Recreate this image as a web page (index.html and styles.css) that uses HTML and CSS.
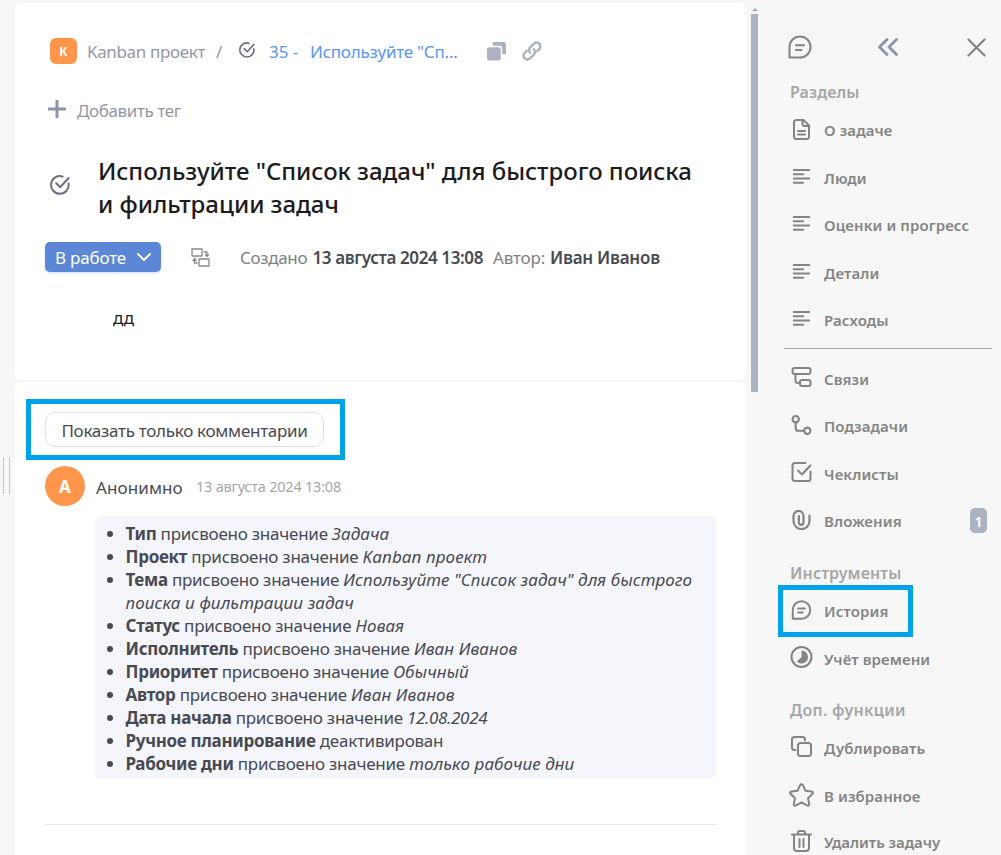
FILE: index.html
```html
<!DOCTYPE html>
<html lang="ru">
<head>
<meta charset="utf-8">
<title>Kanban проект</title>
<link rel="stylesheet" href="styles.css">
</head>
<body>
<svg class="defs" aria-hidden="true">
  <symbol id="check-circle" viewBox="0 0 20 20"><path d="M12.6 1.6A8.8 8.8 0 1 0 18.5 8.4"/><path d="M6.3 8.2l4 4L18.6 3"/></symbol>
  <symbol id="chat" viewBox="0 0 24 24"><path d="M1.5 22.5V12A10.5 10.5 0 1 1 12 22.5Z"/><path d="M8 10.2h8M8 15h5.5"/></symbol>
  <symbol id="lines" viewBox="0 0 17 15"><path d="M.8 1h15.4M.8 5.2h9.4M.8 9.5h15.4M.8 13.7h9.4"/></symbol>
</svg>
<div class="app">
  <div class="gutter"><span class="grip"></span></div>
  <main class="content">
    <section class="card task">
      <nav class="crumbs">
        <span class="project-mark">К</span>
        <span class="project">Kanban проект</span>
        <span class="slash">/</span>
        <svg class="icon crumb-check"><use href="#check-circle"/></svg>
        <span class="link num">35 -</span>
        <span class="link name">Используйте "Сп...</span>
        <svg class="copy" viewBox="0 0 20 20"><path d="M7 0h10.5Q20 0 20 2.500V13H16V6.500Q16 4 13.500 4H6V1Q6 0 7 0Z"/><rect y="5.500" width="14.500" height="14" rx="2.500"/></svg>
        <svg class="icon chain" viewBox="0 0 20 20"><path d="M8.200 11.800a3.800 3.800 0 0 1 0-5.400l3.700-3.700a3.800 3.800 0 0 1 5.400 5.400l-2 2M11.800 8.200a3.800 3.800 0 0 1 0 5.400l-3.700 3.700a3.800 3.800 0 0 1-5.400-5.400l2-2"/></svg>
      </nav>
      <div class="add-tag">
        <svg class="icon plus" viewBox="0 0 18 18"><path d="M9 1v16M1 9h16"/></svg>
        <span class="tag-label">Добавить тег</span>
      </div>
      <header class="title-row">
        <svg class="icon title-check"><use href="#check-circle"/></svg>
        <h1>Используйте "Список задач" для быстрого поиска<br>и фильтрации задач</h1>
      </header>
      <div class="meta">
        <button class="status"><span>В работе</span><svg class="icon" viewBox="0 0 14 8"><path d="M1 1l6 6 6-6"/></svg></button>
        <svg class="icon flow" viewBox="0 0 19 19"><path d="M1 1h10v7H1zM8 11h10v7H8zM13 4h3v4M14.500 6.800L16 8.500 17.500 6.800M6 15H3.500v-4M2 12.500l1.500-2 1.500 2"/></svg>
        <span class="created">Создано</span>
        <span class="strong date">13 августа 2024 13:08</span>
        <span class="author">Автор:</span>
        <span class="strong person">Иван Иванов</span>
      </div>
      <p class="description">дд</p>
    </section>
    <section class="card history">
      <div class="filter"><button class="only-comments">Показать только комментарии</button></div>
      <div class="entry-head">
        <span class="avatar">А</span>
        <span class="user">Анонимно</span>
        <time>13 августа 2024 13:08</time>
      </div>
      <ul class="changes">
        <li><b>Тип</b> присвоено значение <i>Задача</i></li>
        <li><b>Проект</b> присвоено значение <i>Kanban проект</i></li>
        <li><b>Тема</b> присвоено значение <i>Используйте "Список задач" для быстрого<br>поиска и фильтрации задач</i></li>
        <li><b>Статус</b> присвоено значение <i>Новая</i></li>
        <li><b>Исполнитель</b> присвоено значение <i>Иван Иванов</i></li>
        <li><b>Приоритет</b> присвоено значение <i>Обычный</i></li>
        <li><b>Автор</b> присвоено значение <i>Иван Иванов</i></li>
        <li><b>Дата начала</b> присвоено значение <i class="digits">12.08.2024</i></li>
        <li><b>Ручное планирование</b> деактивирован</li>
        <li><b>Рабочие дни</b> присвоено значение <i>только рабочие дни</i></li>
      </ul>
      <hr>
    </section>
  </main>
  <div class="scroll"><span class="scroll-up"></span><span class="thumb"></span></div>
  <aside class="sidebar">
    <div class="tools">
      <svg class="icon tool-chat"><use href="#chat"/></svg>
      <svg class="icon collapse" viewBox="0 0 20 18"><path d="M9 1.500L1.500 9 9 16.500M18.500 1.500L11 9l7.500 7.500"/></svg>
      <svg class="icon close" viewBox="0 0 20 20"><path d="M1.500 1.500l17 17M18.500 1.500l-17 17"/></svg>
    </div>
    <h2>Разделы</h2>
    <div class="menu">
      <a class="item"><svg class="icon doc" viewBox="0 0 17 21"><path d="M3.500 1H10.500L16 6.500V17.500Q16 20 13.500 20H3.500Q1 20 1 17.500V3.500Q1 1 3.500 1ZM9.500 1V5Q9.500 7 11.500 7H16M5 12h7M5 15.500h7"/></svg><span>О задаче</span></a>
      <a class="item"><svg class="icon list"><use href="#lines"/></svg><span>Люди</span></a>
      <a class="item"><svg class="icon list"><use href="#lines"/></svg><span>Оценки и прогресс</span></a>
      <a class="item"><svg class="icon list"><use href="#lines"/></svg><span>Детали</span></a>
      <a class="item"><svg class="icon list"><use href="#lines"/></svg><span>Расходы</span></a>
    </div>
    <div class="line"></div>
    <div class="menu">
      <a class="item"><svg class="icon s20" viewBox="0 0 20 20"><rect x="1" y="1" width="18" height="6" rx="2"/><rect x="8.500" y="13" width="10.500" height="6" rx="2"/><path d="M4 7v6.500Q4 16 6.500 16h2"/></svg><span>Связи</span></a>
      <a class="item"><svg class="icon s19" viewBox="0 0 19 19"><circle cx="4" cy="4" r="3"/><circle cx="15" cy="15" r="3"/><path d="M4 7v5.500Q4 15 6.500 15H12"/></svg><span>Подзадачи</span></a>
      <a class="item"><svg class="icon s20" viewBox="0 0 20 20"><path d="M14 1H3.500Q1 1 1 3.500v13Q1 19 3.500 19h13q2.500 0 2.500-2.500V9.500M6.500 8.500l4 4L19 3.500"/></svg><span>Чеклисты</span></a>
      <a class="item"><svg class="icon clip" viewBox="0 0 18 20"><path d="M17 5.500V11a8 8 0 0 1-16 0V6a5 5 0 0 1 10 0v6.500a2.300 2.300 0 0 1-4.600 0V6"/></svg><span>Вложения</span><b class="badge">1</b></a>
    </div>
    <h2 class="instruments">Инструменты</h2>
    <div class="menu">
      <a class="item active"><svg class="icon chat"><use href="#chat"/></svg><span>История</span></a>
      <a class="item"><svg class="icon s22" viewBox="0 0 22 22"><circle cx="11" cy="11" r="10"/><path class="solid" d="M11 4.500A6.500 6.500 0 1 1 6.400 15.600L11 11Z"/></svg><span>Учёт времени</span></a>
    </div>
    <h2 class="extra">Доп. функции</h2>
    <div class="menu">
      <a class="item"><svg class="icon dup" viewBox="0 0 21 21"><rect x="7" y="7" width="13" height="13" rx="2.500"/><path d="M4.500 14H3.500Q1 14 1 11.500V3.500Q1 1 3.500 1H11.500Q14 1 14 3.500v1"/></svg><span>Дублировать</span></a>
      <a class="item"><svg class="icon star" viewBox="0 0 25 24"><path d="M11 2.300q1.500-2 3 0l2.500 5.500 6 .7q2.300.6.800 2.500L19 15.200l1.200 5.900q-.2 2.200-2.300 1.300L12.500 19.300 7.100 22.400q-2.100.9-2.300-1.300L6 15.200 1.700 11Q.2 9.100 2.500 8.500l6-.7Z"/></svg><span>В избранное</span></a>
      <a class="item last"><svg class="icon trash" viewBox="0 0 21 22"><path d="M1 4.500h19M3 4.500V18q0 3 3 3h9q3 0 3-3V4.500M7 4V2.500Q7 1 8.500 1h4Q14 1 14 2.500V4M8.500 9v8M12.500 9v8"/></svg><span>Удалить задачу</span></a>
    </div>
  </aside>
</div>
</body>
</html>
```
FILE: styles.css
```css
*, *::after { box-sizing: border-box; }
body { margin: 0; background: #f7f7f7; font-family: "Noto Sans", "Open Sans", sans-serif; font-size: 17px; color: #484a52; }
.defs { display: none; }
.app { display: grid; grid-template-columns: 15px 731px 12px 1fr; height: 855px; overflow: hidden; white-space: nowrap; }
button { font: inherit; margin: 0; }
.icon { fill: none; stroke: currentColor; stroke-width: 2; stroke-linecap: round; stroke-linejoin: round; flex: none; }

.gutter { padding: 457px 0 0 3px; }
.grip { display: block; width: 7px; height: 37px; border: solid #c4c4c4; border-width: 0 1px; }

.content { padding-top: 3px; display: flex; flex-direction: column; gap: 2px; min-width: 0; }
.card { background: #fff; border-radius: 6px; padding-left: 30px; flex: none; }
.task { height: 377px; }
.history { height: 500px; border-radius: 6px 6px 0 0; padding-top: 30px; }

.crumbs { display: flex; align-items: center; height: 28px; margin-top: 34px; padding-left: 5px; color: #9398a5; }
.project-mark { width: 27px; height: 26px; border-radius: 6px; background: #ff964b; color: #fff; font-size: 12px; font-weight: 700; display: grid; place-items: center; }
.project { width: 129px; margin-left: 10px; letter-spacing: -.35px; }
.slash { width: 23px; }
.crumb-check { width: 16px; height: 16px; color: #6b7080; margin-bottom: 2px; }
.link { color: #5796f3; }
.num { margin-left: 14px; width: 41px; }
.name { width: 177px; letter-spacing: -.22px; }
.copy { width: 19px; height: 19px; fill: #adb3c0; }
.chain { width: 20px; height: 20px; margin-left: 16px; color: #adb3c0; stroke-width: 2.5; }

.add-tag { display: flex; align-items: center; height: 28px; margin-top: 31px; padding-left: 3px; color: #9398a5; letter-spacing: -.37px; }
.plus { width: 18px; height: 18px; stroke-width: 3; margin: 0 11px 2px 0; color: #8c92ab; }
.title-row { display: flex; align-items: center; margin-top: 30px; height: 66px; padding-left: 5px; }
.title-check { width: 20px; height: 20px; color: #6b7080; margin: 0 28px 4px 0; }
h1 { margin: 0; font-size: 24px; line-height: 33px; font-weight: 500; color: #1c1c1e; letter-spacing: -.03px; }
.meta { display: flex; align-items: center; height: 30px; margin-top: 22px; color: #7e7f85; }
.status { width: 116px; height: 30px; border: 0; border-radius: 5px; padding: 0 10px; background: #5b87d6; color: #fff; display: flex; align-items: center; justify-content: space-between; box-shadow: 0 1px 3px #cddaf2; letter-spacing: -.2px; }
.status .icon { width: 14px; height: 8px; }
.flow { width: 19px; height: 19px; stroke-width: 1.3; color: #888; margin: 0 30px; }
.created { width: 72.5px; letter-spacing: -.35px; }
.strong { font-weight: 600; color: #484a52; }
.date { width: 180.5px; letter-spacing: -.38px; }
.author { width: 57px; letter-spacing: -.15px; }
.person { letter-spacing: -.25px; }
.description { margin: 33px 0 0 68px; line-height: 26px; color: #1c1c1e; }

.filter { height: 35px; position: relative; }
.filter::after { content: ""; position: absolute; left: -19px; top: -13px; width: 319px; height: 61px; border: 5px solid #00a2e8; }
.only-comments { width: 279px; height: 35px; padding: 2px 0 0; border: 1px solid #dfdfdf; border-radius: 10px; background: #fff; color: #484a52; letter-spacing: -.28px; }
.entry-head { display: flex; align-items: center; height: 40px; margin-top: 19px; }
.avatar { width: 40px; height: 40px; border-radius: 50%; background: #ff964b; color: #fff; font-weight: 700; display: grid; place-items: center; }
.user { width: 100px; margin-left: 11px; padding-top: 2px; letter-spacing: .1px; }
time { font-size: 14.5px; letter-spacing: -.22px; color: #a6a6a6; }
.changes { margin: 10px 0 0 50px; width: 621px; height: 263px; background: #f5f6fc; border-radius: 6px; padding: 6px 0 4px 30.5px; line-height: 23px; letter-spacing: -.24px; }
.changes b { font-weight: 700; letter-spacing: -.3px; }
.changes i { letter-spacing: .1px; }
.changes .digits { letter-spacing: -.35px; }
hr { width: 671px; border: 0; border-top: 1px solid #e8e8e8; margin: 45px 0 0; }

.scroll { padding: 8px 0 0 5px; }
.scroll-up { display: block; width: 5px; margin: 0 1px 3px; border: solid transparent; border-width: 0 3px 3px; border-bottom-color: #a9afbb; }
.thumb { display: block; width: 7px; height: 378px; background: #abb2c0; }

.sidebar { color: #848484; font-size: 15px; font-weight: 600; padding-left: 26px; display: flex; flex-direction: column; letter-spacing: .1px; }
.tools { height: 40px; margin: 27px 15px 13px 4px; display: flex; align-items: center; justify-content: space-between; flex: none; }
.tool-chat { width: 24px; height: 24px; }
.collapse { width: 20px; height: 18px; color: #8c92ab; stroke-width: 2.8; margin-left: -3px; }
.close { width: 19px; height: 19px; stroke-width: 2.3; }
h2 { margin: 0 0 2.5px 6px; font-size: 16px; line-height: 24px; font-weight: 600; color: #a6a6a6; }
.item { display: flex; align-items: center; height: 47.5px; gap: 10px; padding: 0 14px 0 5px; position: relative; }
.item span { flex: 1; }
.item .icon { width: 25px; height: 20px; margin-bottom: 3px; }
.item .list { height: 15px; margin-bottom: 3px; }
.item .doc { height: 21px; margin-bottom: 2px; }
.item .clip { stroke-width: 2.2; margin-bottom: 2px; }
.item .chat { stroke-width: 2.4; }
.item .s22 { height: 22px; }
.item .dup { height: 21px; }
.item .star { height: 24px; margin-bottom: 1px; }
.item .trash { height: 22px; }
.last { margin-top: -1px; letter-spacing: -.05px; }
.solid { fill: currentColor; stroke: none; }
.line { height: 1px; background: #a6a6a6; margin: 4px 9px 6px 0; flex: none; }
.badge { width: 17px; height: 25px; border-radius: 5px; background: #abb2c0; color: #fff; font-weight: 600; display: grid; place-items: center; margin-bottom: 1px; }
.instruments { margin-top: 16px; }
.extra { margin-top: 15.5px; letter-spacing: .3px; }
.active::after { content: ""; position: absolute; left: -6px; top: -3px; width: 135px; height: 52px; border: 5px solid #00a2e8; }
```
